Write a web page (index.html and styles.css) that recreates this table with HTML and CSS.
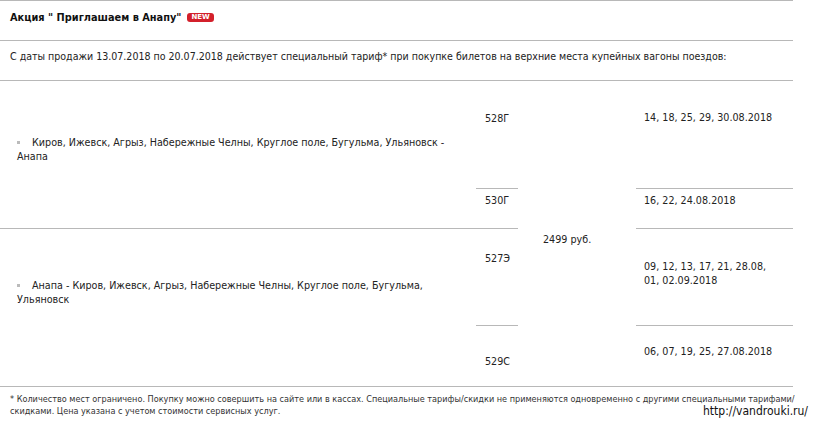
FILE: index.html
```html
<!DOCTYPE html>
<html lang="ru">
<head>
<meta charset="utf-8">
<title>Акция Приглашаем в Анапу</title>
<link rel="stylesheet" href="styles.css">
</head>
<body>
<div class="promo">
  <div class="title-row">
    <h1 class="title">Акция " Приглашаем в Анапу"</h1>
    <span class="badge">NEW</span>
  </div>
  <div class="intro-row">
    <p class="intro">С даты продажи 13.07.2018 по 20.07.2018 действует специальный тариф* при покупке билетов на верхние места купейных вагоны поездов:</p>
  </div>
  <div class="grid">
    <div class="cell route route-1"><span class="bullet"></span>Киров, Ижевск, Агрыз, Набережные Челны, Круглое поле, Бугульма, Ульяновск - Анапа</div>
    <div class="cell route route-2"><span class="bullet"></span>Анапа - Киров, Ижевск, Агрыз, Набережные Челны, Круглое поле, Бугульма, Ульяновск</div>

    <div class="cell train t1">528Г</div>
    <div class="cell train t2">530Г</div>
    <div class="cell train t3">527Э</div>
    <div class="cell train t4">529С</div>

    <div class="cell price">2499 руб.</div>

    <div class="cell dates d1">14, 18, 25, 29, 30.08.2018</div>
    <div class="cell dates d2">16, 22, 24.08.2018</div>
    <div class="cell dates d3">09, 12, 13, 17, 21, 28.08,<br>01, 02.09.2018</div>
    <div class="cell dates d4">06, 07, 19, 25, 27.08.2018</div>
  </div>
  <p class="note">* Количество мест ограничено. Покупку можно совершить на сайте или в кассах. Специальные тарифы/скидки не применяются одновременно с другими специальными тарифами/ скидками. Цена указана с учетом стоимости сервисных услуг.</p>
</div>
<div class="watermark">http://vandrouki.ru/</div>
</body>
</html>
```
FILE: styles.css
```css
* { box-sizing: border-box; }
html, body { margin: 0; padding: 0; background: #fff; }
body {
  font-family: "DejaVu Sans", Verdana, sans-serif;
  color: #222;
  width: 816px;
  height: 424px;
  position: relative;
  overflow: hidden;
}
.promo { width: 793px; }
.title-row {
  height: 41px;
  border-top: 1px solid #b8b8b8;
  border-bottom: 1px solid #b8b8b8;
  display: flex;
  align-items: center;
  padding: 0 0 7px 10px;
}
.title {
  margin: 0;
  font-size: 9.8px;
  font-weight: bold;
  color: #111;
}
.badge {
  margin-left: 6px;
  background: #d3202b;
  color: #fff;
  font-size: 7px;
  font-weight: bold;
  line-height: 9px;
  padding: 0 4px;
  border-radius: 3px;
}
.intro-row {
  height: 40px;
  border-bottom: 1px solid #b8b8b8;
  padding: 8px 0 0 10px;
}
.intro {
  margin: 0;
  font-family: "DejaVu Sans Condensed", "DejaVu Sans", sans-serif;
  font-size: 10.55px;
  line-height: 14px;
  color: #222;
}
.grid {
  display: grid;
  grid-template-columns: 476px 42px 118px 157px;
  grid-template-rows: 108px 40px 97px 61px;
  font-size: 9.6px;
  line-height: 14px;
  color: #222;
}
.cell { border-bottom: 1px solid #b8b8b8; }
.route { grid-column: 1; padding-left: 17px; padding-right: 15px; }
.route-1 { grid-row: 1 / 3; padding-top: 55px; }
.route-2 { grid-row: 3 / 5; padding-top: 50px; }
.bullet {
  display: inline-block;
  width: 3px;
  height: 3px;
  background: #bbb;
  vertical-align: middle;
  margin: 0 12px 2px 0;
}
.train { grid-column: 2; padding-left: 9px; }
.t1 { grid-row: 1; padding-top: 31px; }
.t2 { grid-row: 2; padding-top: 5px; }
.t3 { grid-row: 3; padding-top: 23px; }
.t4 { grid-row: 4; padding-top: 29px; }
.price { grid-column: 3; grid-row: 1 / 5; padding: 152px 0 0 25px; }
.dates { grid-column: 4; padding-left: 8px; }
.d1 { grid-row: 1; padding-top: 30px; }
.d2 { grid-row: 2; padding-top: 5px; }
.d3 { grid-row: 3; padding-top: 31px; }
.d4 { grid-row: 4; padding-top: 19px; }
.note {
  margin: 0 -6px 0 0;
  padding: 6px 0 0 10px;
  font-family: "DejaVu Sans Condensed", "DejaVu Sans", sans-serif;
  font-size: 9.05px;
  line-height: 12px;
  color: #333;
}
.watermark {
  position: absolute;
  left: 703px;
  top: 404px;
  font-family: "DejaVu Sans Condensed", sans-serif;
  font-size: 12px;
  color: #111;
}
```
